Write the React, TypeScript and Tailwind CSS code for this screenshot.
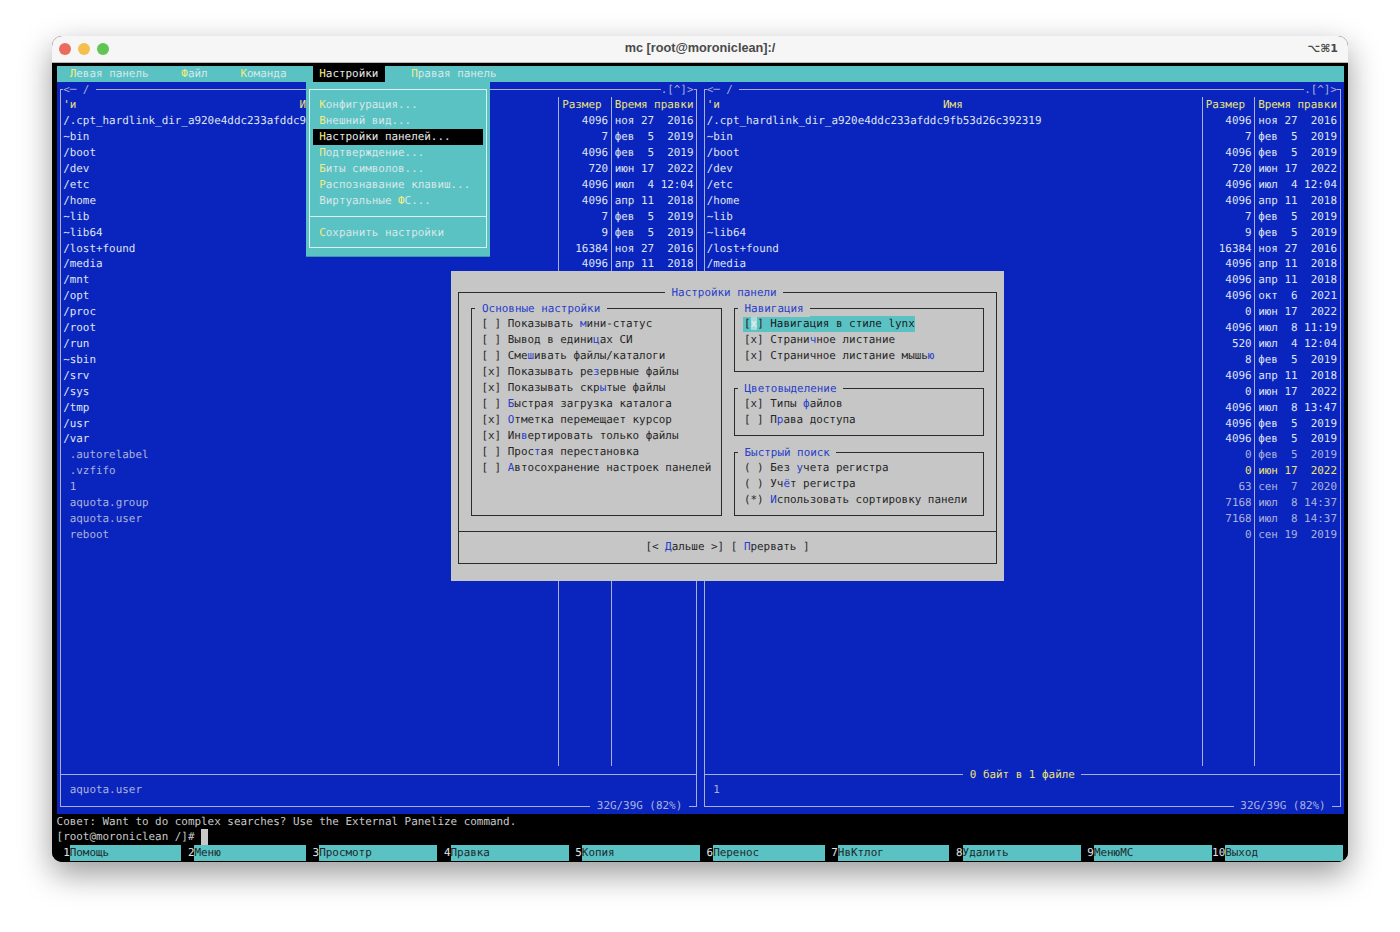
const rows = [
  ["/.cpt_hardlink_dir_a920e4ddc233afddc9fb53d26c392319", "4096", "ноя 27  2016"],
  ["~bin", "7", "фев  5  2019"],
  ["/boot", "4096", "фев  5  2019"],
  ["/dev", "720", "июн 17  2022"],
  ["/etc", "4096", "июл  4 12:04"],
  ["/home", "4096", "апр 11  2018"],
  ["~lib", "7", "фев  5  2019"],
  ["~lib64", "9", "фев  5  2019"],
  ["/lost+found", "16384", "ноя 27  2016"],
  ["/media", "4096", "апр 11  2018"],
  ["/mnt", "4096", "апр 11  2018"],
  ["/opt", "4096", "окт  6  2021"],
  ["/proc", "0", "июн 17  2022"],
  ["/root", "4096", "июл  8 11:19"],
  ["/run", "520", "июл  4 12:04"],
  ["~sbin", "8", "фев  5  2019"],
  ["/srv", "4096", "апр 11  2018"],
  ["/sys", "0", "июн 17  2022"],
  ["/tmp", "4096", "июл  8 13:47"],
  ["/usr", "4096", "фев  5  2019"],
  ["/var", "4096", "фев  5  2019"],
  [" .autorelabel", "0", "фев  5  2019"],
  [" .vzfifo", "0", "июн 17  2022"],
  [" 1", "63", "сен  7  2020"],
  [" aquota.group", "7168", "июл  8 14:37"],
  [" aquota.user", "7168", "июл  8 14:37"],
  [" reboot", "0", "сен 19  2019"],
];

const fkeys = [
  ["1", "Помощь", "w-[17ch]"],
  ["2", "Меню", "w-[17ch]"],
  ["3", "Просмотр", "w-[18ch]"],
  ["4", "Правка", "w-[18ch]"],
  ["5", "Копия", "w-[18ch]"],
  ["6", "Перенос", "w-[17ch]"],
  ["7", "НвКтлог", "w-[17ch]"],
  ["8", "Удалить", "w-[18ch]"],
  ["9", "МенюМС", "w-[18ch]"],
  ["10", "Выход", "w-[18ch]"],
];

const leftOptions = [
  "[ ] Показывать &мини-статус",
  "[ ] Вывод в едини&цах СИ",
  "[ ] Сме&шивать файлы/каталоги",
  "[x] Показывать ре&зервные файлы",
  "[x] Показывать скр&ытые файлы",
  "[ ] &Быстрая загрузка каталога",
  "[x] &Отметка перемещает курсор",
  "[x] Ин&вертировать только файлы",
  "[ ] Прос&тая перестановка",
  "[ ] &Автосохранение настроек панелей",
];

// rows from here on sit behind the dialog, so their covered cells stay empty
const COVERED_FROM = 10;

// "&" marks the hotkey letter, same as mc does in its own menus
function Hot({ text, color }: { text: string; color: string }) {
  const at = text.indexOf("&");
  if (at < 0) return <>{text}</>;
  return (
    <>
      {text.slice(0, at)}
      <span className={color}>{text[at + 1]}</span>
      {text.slice(at + 2)}
    </>
  );
}

function rowColor(name: string, marked?: string) {
  if (!name.startsWith(" ")) return "text-[#dfe3f2]";
  return marked === name ? "text-[#ece27a]" : "text-[#aab1dc]";
}

function Panel({ active, marked }: { active?: boolean; marked?: string }) {
  return (
    <div className="w-[98ch] shrink-0 h-full pl-[calc(0.5ch+0.5px)] pr-[calc(0.5ch-0.5px)] pt-[7.5px] pb-[7px]">
      <div className="relative h-full border border-[#a9afdc] flex flex-col">
        <div className="absolute -top-[8px] left-[calc(0.5ch-1.5px)] h-[15.92px] pr-[1ch] bg-[#0a25bd] text-[#a9afdc] whitespace-pre">{"<─ /"}</div>
        <div className="absolute -top-[8px] right-[calc(0.5ch-0.5px)] h-[15.92px] bg-[#0a25bd] text-[#a9afdc] whitespace-pre">.[^]&gt;</div>

        {/* file list */}
        <div className="flex-1 min-h-0 pt-[7.4px] pb-[7.6px] pl-[calc(0.5ch-1.5px)] flex overflow-hidden">
          <div className="w-[75ch] shrink-0">
            <div className="h-[15.92px] relative text-[#ece27a] text-center">
              <span className="absolute left-0">'и</span>Имя
            </div>
            {rows.map((r, i) => (
              <div key={r[0]} className={"h-[15.92px] whitespace-pre " + rowColor(r[0], marked)}>{active && i >= COVERED_FROM ? "" : r[0]}</div>
            ))}
          </div>
          <div className="w-[1ch] shrink-0 flex justify-center"><div className="w-px h-full bg-[#a9afdc]" /></div>
          <div className="w-[7ch] shrink-0">
            <div className="h-[15.92px] text-[#ece27a]">Размер</div>
            {rows.map((r, i) => (
              <div key={r[0]} className={"h-[15.92px] text-right " + rowColor(r[0], marked)}>{!active && i >= COVERED_FROM ? "" : r[1]}</div>
            ))}
          </div>
          <div className="w-[1ch] shrink-0 flex justify-center"><div className="w-px h-full bg-[#a9afdc]" /></div>
          <div className="w-[12ch] shrink-0">
            <div className="h-[15.92px] text-[#ece27a] whitespace-pre">Время правки</div>
            {rows.map((r, i) => (
              <div key={r[0]} className={"h-[15.92px] whitespace-pre " + rowColor(r[0], marked)}>{!active && i >= COVERED_FROM ? "" : r[2]}</div>
            ))}
          </div>
        </div>

        {/* mini status */}
        <div className="relative shrink-0 h-[24px] border-t border-[#a9afdc] pt-[7px] box-content">
          {active && (
            <div className="absolute -top-[8px] left-0 right-0 flex justify-center">
              <span className="px-[1ch] bg-[#0a25bd] text-[#ece27a] h-[15.92px] whitespace-pre">0 байт в 1 файле</span>
            </div>
          )}
          <div className="pl-[calc(1.5ch-1.5px)] text-[#aab1dc] whitespace-pre">{active ? "1" : "aquota.user"}</div>
        </div>

        <div className="absolute -bottom-[8px] right-[7.5px] px-[1ch] bg-[#0a25bd] text-[#aab1dc] h-[15.92px] whitespace-pre">32G/39G (82%)</div>
      </div>
    </div>
  );
}

function MenuDropdown() {
  const items = ["&Конфигурация...", "&Внешний вид...", "&Настройки панелей...", "&Подтверждение...", "&Биты символов...", "&Распознавание клавиш...", "Виртуальные &ФС..."];
  return (
    <div className="absolute top-0 left-[38ch] w-[28ch] h-[174px] bg-[#5bc2c4] pl-[0.5ch] pr-[0.5ch] pt-[7.5px] shadow-[0_1px_0_#3a9aa6]">
      <div className="h-[159px] border border-[#dcf2f2] pt-[7.4px] pl-[calc(0.5ch-1px)] pr-[calc(0.5ch-1px)] text-[#d6e8e8]">
        {items.map((item, i) => (
          <div key={item} className={"h-[15.92px] px-[1ch] whitespace-pre " + (i === 2 ? "bg-black text-[#e8e8e8]" : "")}>
            <Hot text={item} color="text-[#f0ec80]" />
          </div>
        ))}
        <div className="h-[15.92px] flex items-center -mx-[calc(0.5ch-1px)]"><div className="w-full h-px bg-[#dcf2f2]" /></div>
        <div className="h-[15.92px] px-[1ch] whitespace-pre"><Hot text="&Сохранить настройки" color="text-[#f0ec80]" /></div>
      </div>
    </div>
  );
}

function Group({ title, className, children }: { title: string; className: string; children: React.ReactNode }) {
  return (
    <div className={"relative border border-[#2b2b2b] pt-[7.5px] pb-[7px] pl-[9px] " + className}>
      <div className="absolute -top-[8px] left-[3px] h-[15.92px] px-[1ch] bg-[#c6c6c6] text-[#2740c8] whitespace-pre">{title}</div>
      {children}
    </div>
  );
}

function Option({ text }: { text: string }) {
  return <div className="h-[15.92px] whitespace-pre text-[#262626]"><Hot text={text} color="text-[#2740c8]" /></div>;
}

function Dialog() {
  return (
    <div className="absolute top-[189.4px] left-[394.4px] w-[553px] h-[310px] bg-[#c6c6c6] pt-[21px] px-[7px]">
      <div className="relative h-[272px] border border-[#2b2b2b] flex flex-col">
        <div className="absolute -top-[8px] left-[206px] h-[15.92px] px-[1ch] bg-[#c6c6c6] text-[#2740c8] whitespace-pre">Настройки панели</div>
        <div className="h-[238px] shrink-0 pt-[15px] pl-[12.5px] pr-[12px] flex justify-between">
          <Group title="Основные настройки" className="w-[251px] h-[208px]">
            {leftOptions.map((o) => <Option key={o} text={o} />)}
          </Group>
          <div className="w-[250px] h-[208px] flex flex-col justify-between">
            <Group title="Навигация" className="h-[64px]">
              <div className="h-[15.92px] w-fit -ml-[1px] pl-[1px] bg-[#5bc2c4] whitespace-pre text-[#1b1b1b]">
                [<span className="bg-[#a6dcdc] text-[#f2f2f2]">x</span>] Навигация в стиле lynx
              </div>
              <Option text="[x] Страни&чное листание" />
              <Option text="[x] Страничное листание мышь&ю" />
            </Group>
            <Group title="Цветовыделение" className="h-[48px]">
              <Option text="[x] Типы &файлов" />
              <Option text="[ ] П&рава доступа" />
            </Group>
            <Group title="Быстрый поиск" className="h-[64px]">
              <Option text="( ) Без &учета регистра" />
              <Option text="( ) Уч&ёт регистра" />
              <Option text="(*) &Использовать сортировку панели" />
            </Group>
          </div>
        </div>
        <div className="flex-1 border-t border-[#2b2b2b] flex items-center justify-center gap-[1ch] text-[#262626] whitespace-pre">
          <span><Hot text="[< &Дальше >]" color="text-[#2740c8]" /></span>
          <span><Hot text="[ &Прервать ]" color="text-[#2740c8]" /></span>
        </div>
      </div>
    </div>
  );
}

export default function App() {
  return (
    <div className="w-[1400px] h-[932px] bg-white pt-9 flex justify-center overflow-hidden">
      <div className="w-[1296px] h-[826px] rounded-[10px] overflow-hidden flex flex-col bg-black shadow-[0_12px_32px_rgba(0,0,0,0.4)]">
        {/* macOS title bar */}
        <div className="relative h-[27px] shrink-0 bg-[#f6f6f6] border-b border-[#b8b8b8] flex items-center justify-center font-['Liberation_Sans',sans-serif] text-[12.7px] font-bold text-[#4a4a4a]">
          <div className="absolute left-[7px] flex gap-[7px]">
            <div className="w-3 h-3 rounded-full bg-[#ec6a5e]" />
            <div className="w-3 h-3 rounded-full bg-[#f4bf4f]" />
            <div className="w-3 h-3 rounded-full bg-[#61c554]" />
          </div>
          mc [root@moroniclean]:/
          <div className="absolute right-[10px] font-['DejaVu_Sans',sans-serif] text-[11px]">⌥⌘1</div>
        </div>

        {/* terminal */}
        <div className="flex-1 pt-[2.6px] pl-[4.6px] font-['DejaVu_Sans_Mono',monospace] text-[10.91px] leading-[15.92px] [text-rendering:geometricPrecision] bg-black">
          <div className="w-[196ch]">
            <div className="h-[15.92px] bg-[#5bc2c4] flex whitespace-pre text-[#d6e8e8]">
              <span className="ml-[2ch]"><Hot text="&Левая панель" color="text-[#f0ec80]" /></span>
              <span className="ml-[5ch]"><Hot text="&Файл" color="text-[#f0ec80]" /></span>
              <span className="ml-[5ch]"><Hot text="&Команда" color="text-[#f0ec80]" /></span>
              <span className="ml-[4ch] px-[1ch] bg-black text-[#e8e8e8]"><Hot text="&Настройки" color="text-[#f0ec80]" /></span>
              <span className="ml-[4ch]"><Hot text="&Правая панель" color="text-[#f0ec80]" /></span>
            </div>

            <div className="relative h-[732px] bg-[#0a25bd] flex">
              <Panel />
              <Panel active marked=" .vzfifo" />
              <MenuDropdown />
              <Dialog />
            </div>

            <div className="h-[15.92px] text-[#c8c8c8] whitespace-pre">Совет: Want to do complex searches? Use the External Panelize command.</div>
            <div className="h-[15.92px] text-[#c8c8c8] whitespace-pre flex">
              [root@moroniclean /]# <span className="w-[1ch] h-full bg-[#c8c8c8]" />
            </div>
            <div className="h-[15.92px] flex whitespace-pre">
              {fkeys.map(([n, label, w]) => (
                <div key={n} className="flex">
                  <span className="w-[2ch] text-right text-[#e2e2e2]">{n}</span>
                  <span className={w + " bg-[#5bc2c4] text-[#1c2a2e]"}>{label}</span>
                </div>
              ))}
            </div>
          </div>
        </div>
      </div>
    </div>
  );
}
